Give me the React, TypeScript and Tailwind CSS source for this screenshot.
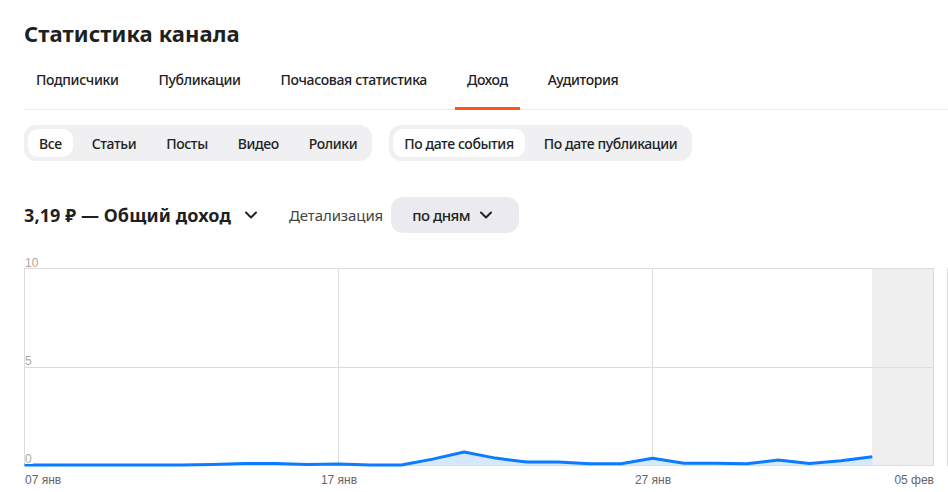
import React from "react";

const values = [0, 0, 0, 0, 0, 0, 0.03, 0.08, 0.08, 0.03, 0.05, 0, 0, 0.3, 0.66, 0.35, 0.15, 0.15, 0.06, 0.06, 0.34, 0.09, 0.09, 0.06, 0.25, 0.08, 0.22, 0.42];

function Chevron({ className }: { className?: string }) {
  return (
    <svg className={className} viewBox="0 0 16 16" fill="none" stroke="currentColor" strokeWidth="2" strokeLinecap="round" strokeLinejoin="round">
      <path d="M3 5.5 8 10.5 13 5.5" />
    </svg>
  );
}

function Chart() {
  const x0 = 24.5;
  const step = 31.4;
  const base = 215;
  const unit = 19.7;
  const pts = values.map((v, i) => [x0 + step * i, base - v * unit] as const);
  const line = pts.map(([x, y], i) => `${i ? "L" : "M"}${x.toFixed(1)} ${y.toFixed(1)}`).join(" ");
  const area = `${line} L${pts[pts.length - 1][0].toFixed(1)} ${base} L${x0} ${base} Z`;
  const grid = "#dcdcdc";
  return (
    <svg width="948" height="242" viewBox="0 0 948 242" className="block" style={{ fontFamily: "'Liberation Sans', Arial, sans-serif" }}>
      <rect x="872" y="18" width="61.5" height="197" fill="#efefef" />
      <line x1="24.5" y1="18.5" x2="933.5" y2="18.5" stroke={grid} />
      <line x1="24.5" y1="117.5" x2="933.5" y2="117.5" stroke={grid} />
      <line x1="24.5" y1="215.5" x2="933.5" y2="215.5" stroke={grid} />
      <line x1="24.5" y1="18" x2="24.5" y2="216" stroke={grid} />
      <line x1="338.5" y1="18" x2="338.5" y2="216" stroke={grid} />
      <line x1="652.5" y1="18" x2="652.5" y2="216" stroke={grid} />
      <line x1="933.5" y1="18" x2="933.5" y2="216" stroke={grid} />
      <line x1="947.5" y1="18" x2="947.5" y2="216" stroke={grid} />
      <path d={area} fill="#d6e8fc" />
      <path d={line} fill="none" stroke="#0a7cff" strokeWidth="3" strokeLinejoin="round" />
      <rect x="24" y="4" width="14" height="14" fill="#fff" />
      <rect x="25" y="201" width="8" height="13" fill="#fff" />
      <text x="25" y="17" fontSize="12" fill="#b0a89e">10</text>
      <text x="25" y="115" fontSize="12" fill="#b0a89e">5</text>
      <text x="25" y="213" fontSize="12" fill="#b0a89e">0</text>
      <text x="25" y="234" fontSize="12" fill="#666">07 янв</text>
      <text x="339" y="234" fontSize="12" fill="#666" textAnchor="middle">17 янв</text>
      <text x="653" y="234" fontSize="12" fill="#666" textAnchor="middle">27 янв</text>
      <text x="934" y="234" fontSize="12" fill="#666" textAnchor="end">05 фев</text>
    </svg>
  );
}

export default function App() {
  const tabs = ["Подписчики", "Публикации", "Почасовая статистика", "Доход", "Аудитория"];
  const types = ["Все", "Статьи", "Посты", "Видео", "Ролики"];
  const dates = ["По дате события", "По дате публикации"];
  return (
    <div className="w-[948px] h-[492px] overflow-hidden bg-white text-[#222]" style={{ fontFamily: "'Noto Sans', 'Open Sans', sans-serif" }}>
      <h1 className="pl-6 pt-[17px] text-[22px] leading-[32px] font-bold text-[#1f1f1f] tracking-[0.1px]">Статистика канала</h1>
      <div className="ml-6 mt-[19px] flex gap-4 border-b border-[#ececec]">
        {tabs.map((t) => (
          <div key={t} className="relative px-3 h-[41px] flex items-start text-[14px] font-medium leading-[24px] tracking-[-0.35px]">
            {t}
            {t === "Доход" && <div className="absolute left-0 right-0 -bottom-px h-[3px] bg-[#ff5319]" />}
          </div>
        ))}
      </div>
      <div className="ml-6 mt-[15px] flex gap-[17px]">
        <div className="flex gap-2 p-1 rounded-xl bg-[#f0f0f2] h-9">
          {types.map((t, i) => (
            <div key={t} className={`px-[11px] h-7 flex items-center rounded-[10px] text-[14px] font-medium tracking-[-0.4px] ${i === 0 ? "bg-white" : ""}`}>{t}</div>
          ))}
        </div>
        <div className="flex gap-2 p-1 rounded-xl bg-[#f0f0f2] h-9">
          {dates.map((t, i) => (
            <div key={t} className={`px-[11px] h-7 flex items-center rounded-[10px] text-[14px] font-medium tracking-[-0.4px] ${i === 0 ? "bg-white" : ""}`}>{t}</div>
          ))}
        </div>
      </div>
      <div className="ml-6 mt-[36px] flex items-center h-9">
        <span className="text-[18px] font-bold text-[#1f1f1f] tracking-[0.1px]">3,19 ₽ — Общий доход</span>
        <Chevron className="ml-3 w-4 h-4 text-[#222]" />
        <span className="ml-[30px] text-[15px] text-[#444] tracking-[-0.1px]">Детализация</span>
        <div className="ml-2 h-9 pl-[21px] pr-[25px] flex items-center gap-2 rounded-xl bg-[#ebebef]">
          <span className="text-[15px] font-medium text-[#222] tracking-[-0.5px]">по дням</span>
          <Chevron className="w-4 h-4 text-[#222]" />
        </div>
      </div>
      <div className="mt-[17px]">
        <Chart />
      </div>
    </div>
  );
}
